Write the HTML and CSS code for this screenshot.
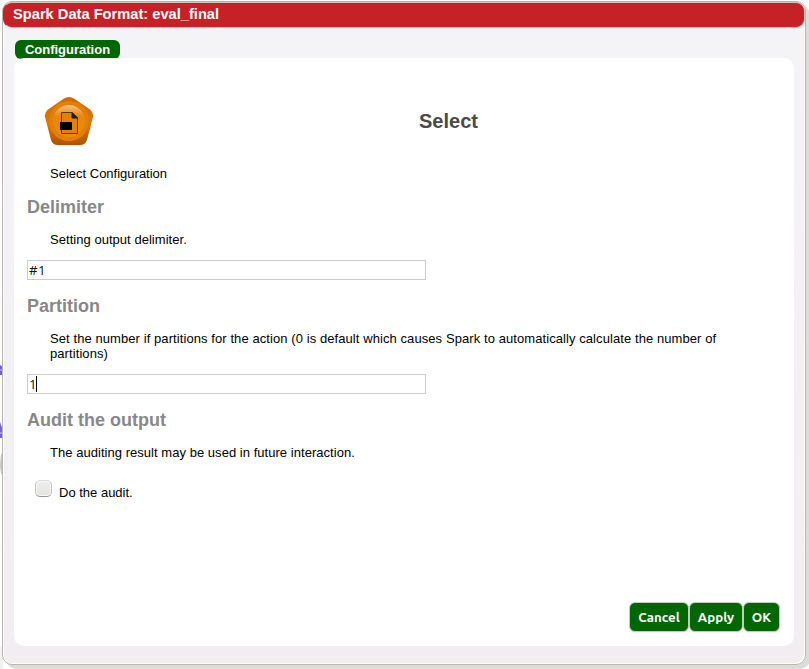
FILE: index.html
```
<!DOCTYPE html>
<html lang="en">
<head>
<meta charset="utf-8">
<title>Spark Data Format</title>
<link rel="stylesheet" href="styles.css">
</head>
<body>
<svg class="canvas-behind" width="3" height="669" viewBox="0 0 3 669"><path d="M0 365Q3 366 2.200 369L2 375H0zM0 422L3 430V438H0z" fill="#7460e0"/><path d="M0 370h2M0 433h2" stroke="#c9c2f5"/><path d="M3 449Q0 456 0 464Q0 472 3 478z" fill="#c5c5c5"/><path d="M0 647h3v22H0z" fill="#f2f2f1"/></svg>
<div class="dialog">
  <header class="title">Spark Data Format: eval_final</header>
  <div class="tab">Configuration</div>
  <main class="panel">
    <div class="heading">
      <svg class="icon" width="50" height="50" viewBox="0 0 50 50">
        <defs>
          <linearGradient id="body" x1="0" y1="0" x2="0" y2="1"><stop offset="0" stop-color="#d06a00"/><stop offset=".55" stop-color="#dc7804"/><stop offset="1" stop-color="#b05200"/></linearGradient>
          <linearGradient id="disc" x1="0" y1="0" x2="0" y2="1"><stop offset="0" stop-color="#f8c080"/><stop offset=".35" stop-color="#e8860e"/><stop offset="1" stop-color="#f08a00"/></linearGradient>
        </defs>
        <path d="M20 2.500Q25 -.5 30 2.500L46 13.500Q50 17 49 21L43 44Q41.500 49 36 49H14Q8.500 49 7 44L1 21Q0 17 4 13.500Z" fill="url(#body)"/>
        <circle cx="25" cy="25" r="20" fill="#e27f05"/>
        <circle cx="25" cy="25" r="16" fill="url(#disc)"/>
        <path d="M17.500 16.500H28L33.500 22V37.500H17.500Z" fill="#e58003" stroke="#5b3607"/>
        <path d="M28 16.500V22H33.500Z" fill="#17202a" stroke="#17202a"/>
        <path d="M16 26h12v8H16z"/>
      </svg>
      <h1>Select</h1>
    </div>
    <p>Select Configuration</p>
    <h2>Delimiter</h2>
    <p class="hint">Setting output delimiter.</p>
    <div class="field">#1</div>
    <h2>Partition</h2>
    <p class="long">Set the number if partitions for the action (0 is default which causes Spark to automatically calculate the number of partitions)</p>
    <div class="field">1<span class="caret"></span></div>
    <h2>Audit the output</h2>
    <p class="hint">The auditing result may be used in future interaction.</p>
    <label class="check"><span class="box"></span>Do the audit.</label>
    <footer><button class="cancel">Cancel</button><button class="apply">Apply</button><button class="ok">OK</button></footer>
  </main>
</div>
</body>
</html>
```
FILE: styles.css
```
* { box-sizing: border-box; }
body {
  margin: 0;
  height: 669px;
  padding: 1px 3px 4px 2px;
  overflow: hidden;
  background: #fff;
  font: 13px/15px "Liberation Sans", Arial, sans-serif;
  color: #000;
}
.canvas-behind { position: absolute; left: 0; top: 0; }
.dialog {
  position: relative;
  width: 804px;
  height: 664px;
  padding: 0 1px 1px 0;
  border: 1px solid #bbb5ad;
  border-radius: 10px;
  background: linear-gradient(#f4f4f7, #f2edf1);
  box-shadow: inset -1px -1px #fff, inset 1px 0 #fff, 4px 4px 0 #dcdcda;
}
.title {
  height: 26px;
  margin-right: -1px;
  padding-left: 9px;
  border: 1px solid #cdc3bb;
  border-left-color: #c52127;
  border-radius: 9px;
  background: #c52127;
  color: #fff;
  font-size: 14.667px;
  font-weight: bold;
  line-height: 22px;
}
.tab {
  width: 105px;
  height: 19px;
  margin: 12px 0 0 12px;
  border-radius: 6px;
  background: #060;
  color: #fff;
  font-weight: bold;
  line-height: 19px;
  text-align: center;
}
.panel {
  display: flex;
  flex-direction: column;
  width: 780px;
  height: 588px;
  margin: -1px 0 0 11px;
  padding: 38px 14px 14px 13px;
  border-radius: 10px;
  background: #fff;
  position: relative;
}
.heading { display: flex; height: 50px; padding-left: 17px; }
.icon { flex: none; }
h1 {
  flex: 1;
  margin: 13px 0 0;
  padding-left: 23px;
  color: #4a4a4a;
  font-size: 20px;
  line-height: 24px;
  text-align: center;
}
p { margin: 0 32px 0 23px; }
.hint { letter-spacing: .038px; }
.long { letter-spacing: .08px; }
.heading + p { margin-top: 20px; }
h2 {
  margin: 16px 0 14px;
  color: #888;
  font-size: 18px;
  line-height: 21px;
}
.field {
  display: flex;
  width: 399px;
  height: 20px;
  margin-top: 13px;
  padding-left: 1px;
  border: 1px solid #ccc;
  font: 13.333px/19px "Open Sans", sans-serif;
  letter-spacing: .3px;
  color: #111;
}
.caret { width: 1px; height: 16px; margin: 1px 0 0 -1px; background: #000; }
.check { display: flex; margin: 20px 0 0 8px; height: 25px; line-height: 25px; }
.box {
  width: 17px;
  height: 17px;
  margin: 0 7px 0 0;
  border: 1px solid #c4c1be;
  border-top-color: #dddbd9;
  border-bottom-color: #989592;
  border-radius: 5px;
  background: linear-gradient(#eee, #e2e1e0);
  box-shadow: inset 0 0 0 1px #f7f7f7;
}
footer { display: flex; justify-content: flex-end; margin-top: auto; }
button {
  height: 30px;
  padding: 2px 0 0;
  border: 1px solid #c0cfbd;
  border-radius: 6px;
  background: #060;
  color: #fff;
  font: bold 13.333px/26px Ubuntu, "Noto Sans", sans-serif;
}
.cancel { width: 60px; }
.apply { width: 54px; }
.ok { width: 37px; }
```
